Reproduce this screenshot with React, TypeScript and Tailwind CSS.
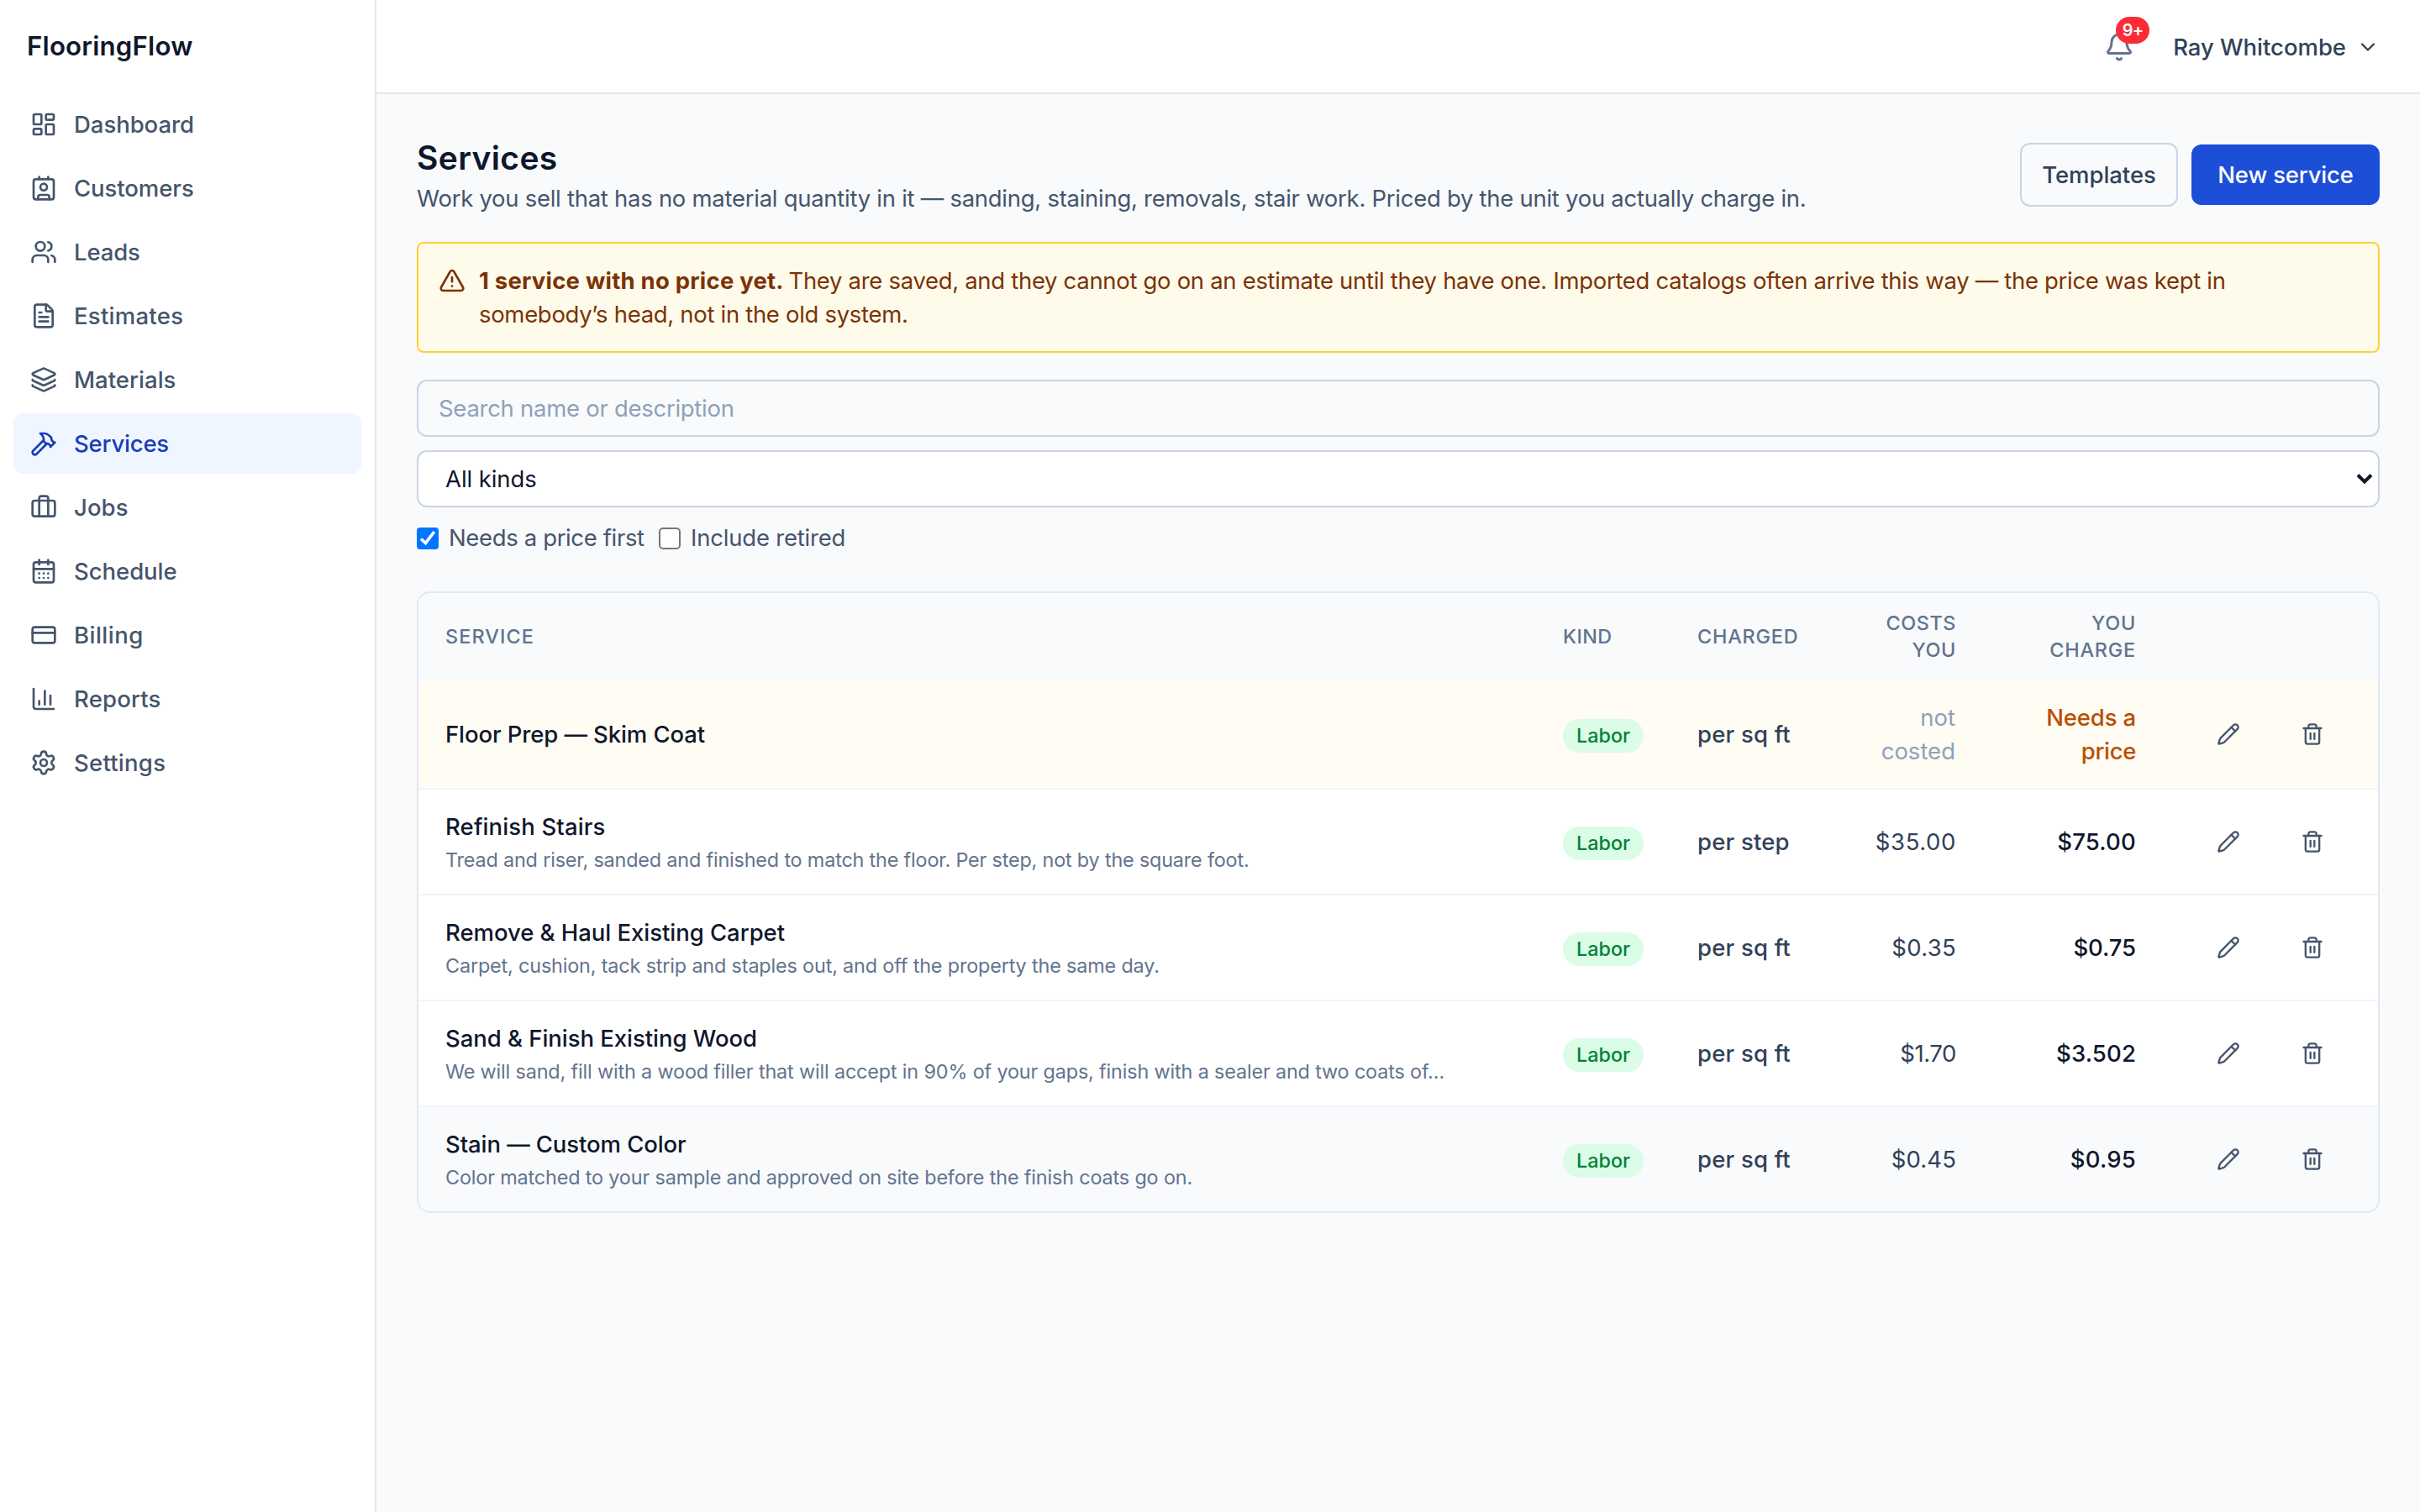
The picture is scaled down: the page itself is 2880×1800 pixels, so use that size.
import {
  Bell,
  Briefcase,
  CalendarDays,
  ChartColumn,
  ChevronDown,
  Contact,
  CreditCard,
  FileText,
  Hammer,
  LayoutDashboard,
  Layers,
  Pencil,
  Settings,
  Trash2,
  TriangleAlert,
  Users,
  type LucideIcon,
} from "lucide-react";

type NavItem = { label: string; icon: LucideIcon; tracking: string; active?: boolean };

const nav: NavItem[] = [
  { label: "Dashboard", icon: LayoutDashboard, tracking: "tracking-[-0.04px]" },
  { label: "Customers", icon: Contact, tracking: "tracking-[-0.07px]" },
  { label: "Leads", icon: Users, tracking: "tracking-[-0.12px]" },
  { label: "Estimates", icon: FileText, tracking: "tracking-[0.27px]" },
  { label: "Materials", icon: Layers, tracking: "tracking-[0.02px]" },
  { label: "Services", icon: Hammer, tracking: "tracking-[-0.2px]", active: true },
  { label: "Jobs", icon: Briefcase, tracking: "tracking-[0.08px]" },
  { label: "Schedule", icon: CalendarDays, tracking: "tracking-[-0.05px]" },
  { label: "Billing", icon: CreditCard, tracking: "tracking-[0.48px]" },
  { label: "Reports", icon: ChartColumn, tracking: "tracking-[0.19px]" },
  { label: "Settings", icon: Settings, tracking: "tracking-[0.25px]" },
];

type Service = {
  name: string;
  nameTracking: string;
  description?: string;
  descriptionTracking?: string;
  unit: string;
  cost?: string;
  costTracking?: string;
  price?: string;
  priceTracking?: string;
  row: string;
};

const services: Service[] = [
  {
    name: "Floor Prep — Skim Coat",
    nameTracking: "tracking-[-0.1px]",
    unit: "per sq ft",
    row: "border-b-2 border-slate-100 bg-[#fffcf3]",
  },
  {
    name: "Refinish Stairs",
    nameTracking: "tracking-[0.14px]",
    description: "Tread and riser, sanded and finished to match the floor. Per step, not by the square foot.",
    descriptionTracking: "tracking-[-0.178px]",
    unit: "per step",
    cost: "$35.00",
    costTracking: "tracking-[0.6px]",
    price: "$75.00",
    priceTracking: "tracking-[0.2px]",
    row: "border-b-2 border-slate-100 bg-white",
  },
  {
    name: "Remove & Haul Existing Carpet",
    nameTracking: "tracking-[-0.04px]",
    description: "Carpet, cushion, tack strip and staples out, and off the property the same day.",
    descriptionTracking: "tracking-[-0.162px]",
    unit: "per sq ft",
    cost: "$0.35",
    costTracking: "tracking-[0.3px]",
    price: "$0.75",
    priceTracking: "tracking-[-0.1px]",
    row: "border-b-2 border-slate-100 bg-white",
  },
  {
    name: "Sand & Finish Existing Wood",
    nameTracking: "tracking-[-0.04px]",
    description:
      "We will sand, fill with a wood filler that will accept in 90% of your gaps, finish with a sealer and two coats of…",
    descriptionTracking: "tracking-[-0.157px]",
    unit: "per sq ft",
    cost: "$1.70",
    costTracking: "tracking-[-0.4px]",
    price: "$3.502",
    priceTracking: "tracking-[0.15px]",
    row: "border-b-2 border-slate-100 bg-white",
  },
  {
    name: "Stain — Custom Color",
    nameTracking: "tracking-[-0.09px]",
    description: "Color matched to your sample and approved on site before the finish coats go on.",
    descriptionTracking: "tracking-[-0.156px]",
    unit: "per sq ft",
    cost: "$0.45",
    costTracking: "tracking-[0.1px]",
    price: "$0.95",
    priceTracking: "tracking-[0.2px]",
    row: "bg-slate-50",
  },
];

const columns = "grid grid-cols-[1330px_160px_184px_187px_214px_1fr] items-center";

function Sidebar() {
  return (
    <aside className="flex w-[448px] shrink-0 flex-col border-r-2 border-slate-200 bg-white">
      <div className="flex h-[110px] items-center px-8 text-[31.2px] font-semibold tracking-[0.2px] text-slate-900">
        FlooringFlow
      </div>
      <nav className="flex flex-col gap-1 px-4 pt-0.5">
        {nav.map(({ label, icon: Icon, tracking, active }) => (
          <a
            key={label}
            className={`flex h-[72px] items-center gap-5 rounded-xl px-5 font-medium ${
              active ? "bg-blue-50 text-blue-800" : "text-slate-600"
            }`}
          >
            <Icon size={32} />
            <span className={tracking}>{label}</span>
          </a>
        ))}
      </nav>
    </aside>
  );
}

function TopBar() {
  return (
    <header className="flex h-28 shrink-0 items-center justify-end border-b-2 border-slate-200 bg-white pt-0.5 pr-12">
      <div className="relative mr-[46px]">
        <Bell size={36} className="text-slate-500" />
        <span className="absolute -top-[18px] left-3.5 flex h-8 w-10 items-center justify-center rounded-full bg-red-500 pb-px text-[20px] font-semibold tracking-[-0.6px] text-white">
          9+
        </span>
      </div>
      <button className="flex items-center font-medium text-slate-700">
        <span className="tracking-[-0.03px]">Ray Whitcombe</span>
        <ChevronDown size={28} className="ml-3" />
      </button>
    </header>
  );
}

function PageHeading() {
  return (
    <div className="flex items-center justify-between">
      <div>
        <h1 className="text-[39px] leading-[56px] font-semibold tracking-[0.35px] text-slate-900">Services</h1>
        <p className="tracking-[-0.274px] text-slate-600">
          Work you sell that has no material quantity in it — sanding, staining, removals, stair work. Priced by the
          unit you actually charge in.
        </p>
      </div>
      <div className="flex items-center gap-4">
        <button className="h-[76px] w-[188px] rounded-xl border-2 border-slate-300 font-medium tracking-[-0.05px] text-slate-700">
          Templates
        </button>
        <button className="h-[72px] w-[224px] rounded-xl bg-[#1d4ed8] font-medium tracking-[-0.17px] text-white">
          New service
        </button>
      </div>
    </div>
  );
}

function PriceAlert() {
  return (
    <div className="mt-8 flex gap-4 rounded-lg border-2 border-amber-300 bg-amber-50 p-6 text-amber-900">
      <TriangleAlert size={32} className="mt-1 shrink-0" />
      <p className="whitespace-nowrap">
        <strong className="-mr-0.5 font-bold tracking-[0.21px]">1 service with no price yet.</strong>{" "}
        <span className="tracking-[-0.315px]">
          They are saved, and they cannot go on an estimate until they have one. Imported catalogs often arrive this way
          — the price was kept in
          <br />
          somebody’s head, not in the old system.
        </span>
      </p>
    </div>
  );
}

function Filters() {
  return (
    <div className="mt-8 flex flex-col gap-4">
      <input
        placeholder="Search name or description"
        className="h-[68px] rounded-xl border-2 border-slate-300 bg-transparent px-6 tracking-[-0.28px] placeholder:text-slate-400"
      />
      <div className="flex h-[68px] items-center justify-between rounded-xl border-2 border-slate-300 bg-white pr-1.5 pl-8 text-slate-900">
        <span className="tracking-[-0.08px]">All kinds</span>
        <svg width="20" height="14" viewBox="0 0 20 14" fill="none" stroke="currentColor" strokeWidth="4">
          <path d="M2 2.5 10 10.5 18 2.5" />
        </svg>
      </div>
      <div className="flex h-10 items-center gap-4 text-slate-600">
        <label className="flex w-[272px] items-center gap-3">
          <span className="mt-0.5 flex size-[26px] items-center justify-center rounded-[4px] bg-[#0075ff]">
            <svg width="26" height="26" viewBox="0 0 26 26" fill="none" stroke="white" strokeWidth="3.6">
              <path d="M5 13.5 10.5 18.5 20.8 5" />
            </svg>
          </span>
          <span className="tracking-[-0.36px]">Needs a price first</span>
        </label>
        <label className="flex items-center gap-3">
          <span className="mt-0.5 size-[26px] rounded-[5px] border-2 border-[#767676] bg-white" />
          <span className="tracking-[-0.2px]">Include retired</span>
        </label>
      </div>
    </div>
  );
}

function ServiceTable() {
  return (
    <div className="mt-11 overflow-hidden rounded-2xl border-2 border-slate-200 bg-white">
      <div className={`${columns} h-[104px] bg-slate-50 text-[23.4px] leading-8 font-medium text-slate-500`}>
        <div className="px-8 tracking-[1.1px]">SERVICE</div>
        <div className="px-8 tracking-[0.4px]">KIND</div>
        <div className="px-8 tracking-[0.8px]">CHARGED</div>
        <div className="pr-[31px] text-right tracking-[0.6px]">
          COSTS
          <br />
          YOU
        </div>
        <div className="pr-[31px] text-right tracking-[0.8px]">
          YOU
          <br />
          CHARGE
        </div>
        <div />
      </div>
      {services.map((s) => (
        <div key={s.name} className={`${columns} ${s.row}`}>
          <div className="px-8 py-6">
            <div className={`font-medium text-slate-900 ${s.nameTracking}`}>{s.name}</div>
            {s.description && (
              <div className={`mt-1 text-[23.4px] leading-8 whitespace-nowrap text-slate-500 ${s.descriptionTracking}`}>
                {s.description}
              </div>
            )}
          </div>
          <div className="px-8">
            <span className="mt-1 flex h-10 w-24 items-center justify-center rounded-full bg-green-100 text-[23.4px] leading-8 font-medium text-green-700">
              Labor
            </span>
          </div>
          <div className="px-8 font-medium tracking-[0.2px] text-slate-700">{s.unit}</div>
          {s.cost ? (
            <div className={`pr-[31px] text-right text-slate-700 ${s.costTracking}`}>{s.cost}</div>
          ) : (
            <div className="py-6 pr-8 text-right text-slate-400">
              not
              <br />
              costed
            </div>
          )}
          {s.price ? (
            <div className={`pr-[31px] text-right font-medium text-slate-900 ${s.priceTracking}`}>{s.price}</div>
          ) : (
            <div className="py-6 pr-[31px] text-right font-medium text-amber-700">
              <span className="tracking-[-0.15px]">Needs a</span>
              <br />
              <span className="tracking-[-0.35px]">price</span>
            </div>
          )}
          <div className="flex justify-end gap-2 pr-8 text-slate-600">
            <button className="flex w-[92px] justify-center">
              <Pencil size={28} />
            </button>
            <button className="flex w-[92px] justify-center">
              <Trash2 size={28} />
            </button>
          </div>
        </div>
      ))}
    </div>
  );
}

export default function App() {
  return (
    <div className="flex h-[1800px] w-[2880px] overflow-hidden bg-slate-50 font-['Inter',sans-serif] text-[27.5px] leading-10">
      <Sidebar />
      <div className="flex flex-1 flex-col">
        <TopBar />
        <main className="flex-1 px-12 pt-12">
          <PageHeading />
          <PriceAlert />
          <Filters />
          <ServiceTable />
        </main>
      </div>
    </div>
  );
}
